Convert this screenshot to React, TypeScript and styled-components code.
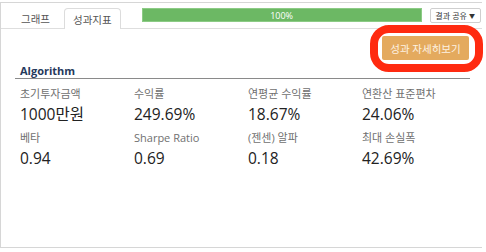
import styled, { createGlobalStyle } from "styled-components";

const GlobalStyle = createGlobalStyle`
  body {
    margin: 0;
    background: #fff;
    font-family: "Open Sans", "Noto Sans CJK KR", sans-serif;
  }
`;

const Frame = styled.div`
  position: relative;
  margin-top: 2px;
  width: 482px;
  height: 246px;
  border: 1px solid #d6d6d6;
  border-right: none;
  box-sizing: border-box;
`;

const Header = styled.div`
  display: flex;
  align-items: flex-end;
  height: 25px;
  padding-left: 13px;
  border-bottom: 1px solid #dedede;
`;

interface TabProps {
  active?: boolean;
}

const Tab = styled.div<TabProps>`
  flex-shrink: 0;
  white-space: nowrap;
  height: ${(p) => (p.active ? "20px" : "19px")};
  padding: 0 ${(p) => (p.active ? "8px" : "6px")};
  margin-right: ${(p) => (p.active ? "21px" : "7px")};
  margin-bottom: ${(p) => (p.active ? "-1px" : "0")};
  display: flex;
  align-items: center;
  font-size: 10.5px;
  color: #555;
  background: #fff;
  border: 1px solid ${(p) => (p.active ? "#dcdcdc" : "transparent")};
  border-bottom: none;
  border-radius: 4px 4px 0 0;
`;

const Progress = styled.div`
  flex-shrink: 0;
  align-self: flex-start;
  margin-top: 5px;
  width: 280px;
  height: 14px;
  background: #6cb864;
  border: 1px solid #8ccb85;
  box-sizing: border-box;
  color: #fff;
  font-size: 9px;
  display: flex;
  align-items: center;
  justify-content: center;
`;

const ShareButton = styled.div`
  flex-shrink: 0;
  white-space: nowrap;
  align-self: flex-start;
  margin-top: 5px;
  margin-left: 8px;
  width: 51px;
  height: 15px;
  box-sizing: border-box;
  border: 1px solid #cfcfcf;
  border-radius: 2px;
  font-size: 8px;
  color: #333;
  display: flex;
  align-items: center;
  justify-content: center;
  gap: 2px;
`;

const Caret = styled.span`
  font-size: 6px;
`;

const Toolbar = styled.div`
  display: flex;
  justify-content: flex-end;
  padding: 7px 13px 0 0;
  height: 24px;
`;

const DetailButton = styled.div`
  width: 87px;
  height: 24px;
  background: #e4aa5e;
  border-radius: 2px;
  color: #fdf2e2;
  font-size: 10.5px;
  display: flex;
  align-items: center;
  justify-content: center;
`;

const Highlight = styled.div`
  position: absolute;
  left: 369px;
  top: 22px;
  width: 113px;
  height: 47px;
  border: 8px solid #ff2a10;
  border-radius: 19px;
  box-sizing: border-box;
`;

const Section = styled.div`
  margin: 4px 12px 0 14px;
`;

const SectionTitle = styled.div`
  padding-left: 5px;
  font-size: 11px;
  font-weight: 700;
  color: #253a5c;
  line-height: 14px;
  border-bottom: 1px solid #8a8a8a;
`;

const Grid = styled.div`
  display: grid;
  grid-template-columns: repeat(4, 114px);
  row-gap: 3px;
  padding-top: 5px;
`;

const Cell = styled.div`
  padding-left: 5px;
`;

const Label = styled.div`
  font-size: 11px;
  line-height: 19px;
  color: #707070;
`;

const Value = styled.div`
  font-size: 15.5px;
  line-height: 22px;
  color: #222;
`;

const stats = [
  { label: "초기투자금액", value: "1000만원" },
  { label: "수익률", value: "249.69%" },
  { label: "연평균 수익률", value: "18.67%" },
  { label: "연환산 표준편차", value: "24.06%" },
  { label: "베타", value: "0.94" },
  { label: "Sharpe Ratio", value: "0.69" },
  { label: "(젠센) 알파", value: "0.18" },
  { label: "최대 손실폭", value: "42.69%" },
];

export default function App() {
  return (
    <>
      <GlobalStyle />
      <Frame>
        <Header>
          <Tab>그래프</Tab>
          <Tab active>성과지표</Tab>
          <Progress>100%</Progress>
          <ShareButton>
            결과 공유 <Caret>▼</Caret>
          </ShareButton>
        </Header>
        <Toolbar>
          <DetailButton>성과 자세히보기</DetailButton>
        </Toolbar>
        <Section>
          <SectionTitle>Algorithm</SectionTitle>
          <Grid>
            {stats.map((s) => (
              <Cell key={s.label}>
                <Label>{s.label}</Label>
                <Value>{s.value}</Value>
              </Cell>
            ))}
          </Grid>
        </Section>
        <Highlight />
      </Frame>
    </>
  );
}
